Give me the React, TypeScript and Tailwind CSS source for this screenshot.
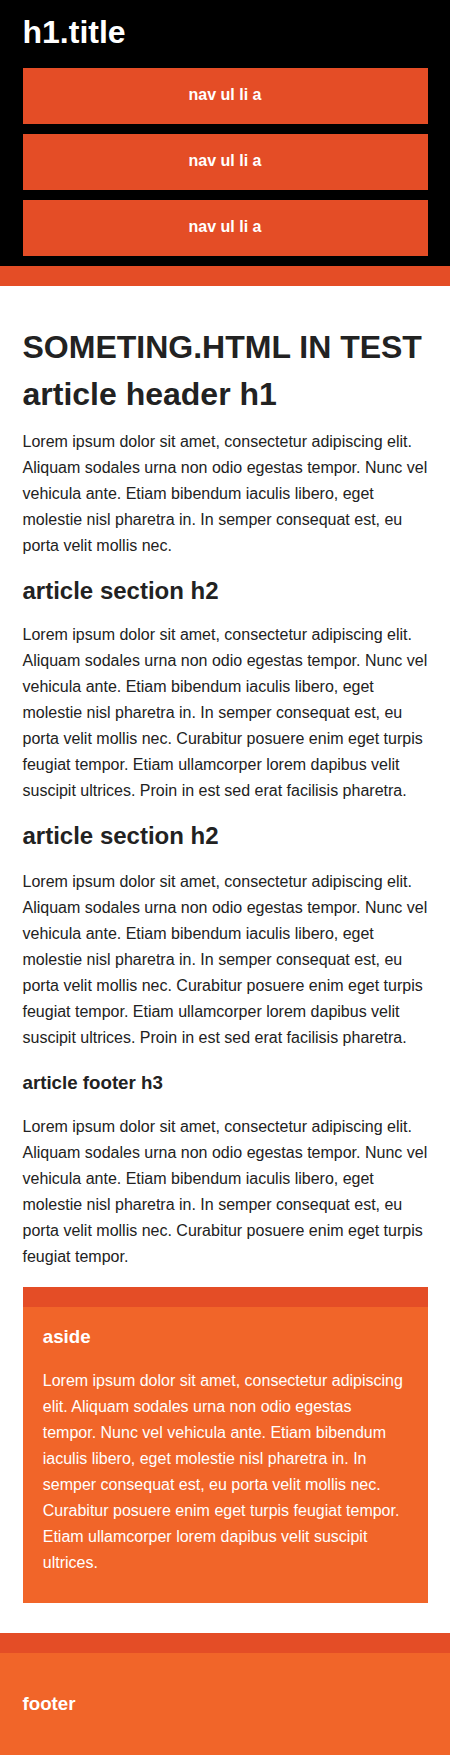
const lorem =
  'Lorem ipsum dolor sit amet, consectetur adipiscing elit. Aliquam sodales urna non odio egestas tempor. Nunc vel vehicula ante. Etiam bibendum iaculis libero, eget molestie nisl pharetra in. In semper consequat est, eu porta velit mollis nec.';
const loremLong =
  lorem + ' Curabitur posuere enim eget turpis feugiat tempor. Etiam ullamcorper lorem dapibus velit suscipit ultrices. Proin in est sed erat facilisis pharetra.';
const loremFooter = lorem + ' Curabitur posuere enim eget turpis feugiat tempor.';
const loremAside =
  lorem + ' Curabitur posuere enim eget turpis feugiat tempor. Etiam ullamcorper lorem dapibus velit suscipit ultrices.';

function NavLink({ first }: { first?: boolean }) {
  return (
    <li className={first ? '' : 'mt-[10px]'}>
      <a
        href="#"
        className="block pt-[14px] pb-[16px] text-center text-[16px] leading-[26px] font-bold text-white no-underline bg-[#e44d26]"
      >
        nav ul li a
      </a>
    </li>
  );
}

export default function App() {
  return (
    <div className="min-h-screen bg-white text-[#222] text-[16px] leading-[26px] font-['Liberation_Sans',Arial,sans-serif]">
      {/* header */}
      <div className="bg-black border-b-[20px] border-[#e44d26]">
        <header className="w-[90%] mx-auto pt-[19px] pb-[10px]">
          <h1 className="text-[32px] leading-[26px] font-bold text-white">h1.title</h1>
          <nav className="mt-[23px]">
            <ul>
              <NavLink first />
              <NavLink />
              <NavLink />
            </ul>
          </nav>
        </header>
      </div>

      {/* main */}
      <div className="bg-white">
        <div className="w-[90%] mx-auto pt-[48px] pb-[30px]">
          <article>
            <header>
              <h1 className="text-[32px] leading-[26px] font-bold">SOMETING.HTML IN TEST</h1>
              <h1 className="mt-[21px] text-[32px] leading-[26px] font-bold">article header h1</h1>
              <p className="mt-[22px]">{lorem}</p>
            </header>
            <section>
              <h2 className="mt-[19px] text-[24px] leading-[26px] font-bold">article section h2</h2>
              <p className="mt-[18px]">{loremLong}</p>
            </section>
            <section>
              <h2 className="mt-[19px] text-[24px] leading-[26px] font-bold">article section h2</h2>
              <p className="mt-[20px]">{loremLong}</p>
            </section>
            <footer>
              <h3 className="mt-[19px] text-[18.72px] leading-[26px] font-bold">article footer h3</h3>
              <p className="mt-[18px]">{loremFooter}</p>
            </footer>
          </article>

          <aside className="mt-[17px] bg-[#f16529] border-t-[20px] border-[#e44d26] px-[5%] pb-[27px] text-white">
            <h3 className="pt-[17px] text-[18.72px] leading-[26px] font-bold">aside</h3>
            <p className="mt-[18px]">{loremAside}</p>
          </aside>
        </div>
      </div>

      {/* footer */}
      <div className="bg-[#f16529] border-t-[20px] border-[#e44d26]">
        <footer className="w-[90%] mx-auto pt-[38px] pb-[38px]">
          <h3 className="text-[18.72px] leading-[26px] font-bold text-white">footer</h3>
        </footer>
      </div>
    </div>
  );
}
